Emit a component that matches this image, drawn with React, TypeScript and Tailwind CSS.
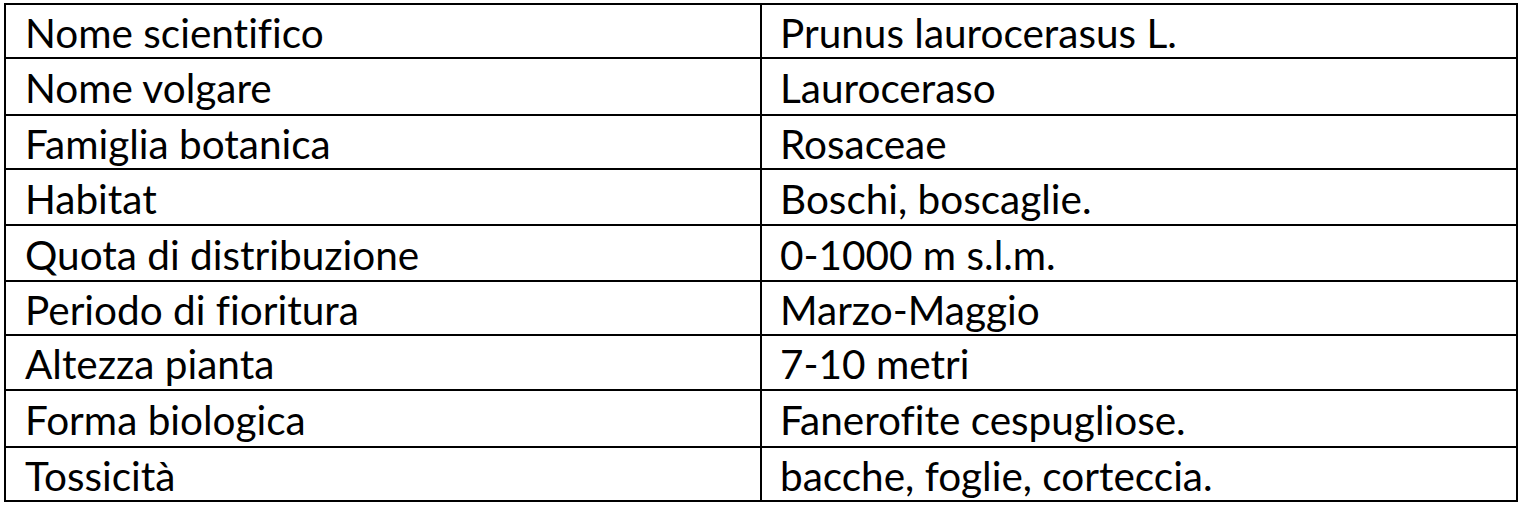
import React from 'react';

interface Row {
  label: string;
  value: string;
  h: string;
}

const rows: Row[] = [
  { label: 'Nome scientifico', value: 'Prunus laurocerasus L.', h: 'h-[54px] border-b-2' },
  { label: 'Nome volgare', value: 'Lauroceraso', h: 'h-[57px] border-b-2' },
  { label: 'Famiglia botanica', value: 'Rosaceae', h: 'h-[54px] border-b-2' },
  { label: 'Habitat', value: 'Boschi, boscaglie.', h: 'h-[56px] border-b-2' },
  { label: 'Quota di distribuzione', value: '0-1000 m s.l.m.', h: 'h-[56px] border-b-2' },
  { label: 'Periodo di fioritura', value: 'Marzo-Maggio', h: 'h-[54px] border-b-2' },
  { label: 'Altezza pianta', value: '7-10 metri', h: 'h-[55px] border-b-2' },
  { label: 'Forma biologica', value: 'Fanerofite cespugliose.', h: 'h-[57px] border-b-2' },
  { label: 'Tossicità', value: 'bacche, foglie, corteccia.', h: 'h-[52px]' },
];

const App = () => {
  return (
    <div className="w-[1523px] h-[506px] bg-white pt-[3px] pl-[4px]">
      <div
        className="w-[1514px] border-2 border-black text-black text-[40.5px] [font-variant-ligatures:none]"
        style={{ fontFamily: 'Lato, "Open Sans", sans-serif' }}
      >
        {rows.map((row) => (
          <div key={row.label} className={`flex border-black ${row.h}`}>
            <div className="w-[756px] shrink-0 border-r-2 border-black flex items-center pl-[19px] pt-[4px] leading-none">
              {row.label}
            </div>
            <div className="flex-1 flex items-center pl-[18px] pt-[4px] leading-none">
              {row.value}
            </div>
          </div>
        ))}
      </div>
    </div>
  );
};

export default App;
